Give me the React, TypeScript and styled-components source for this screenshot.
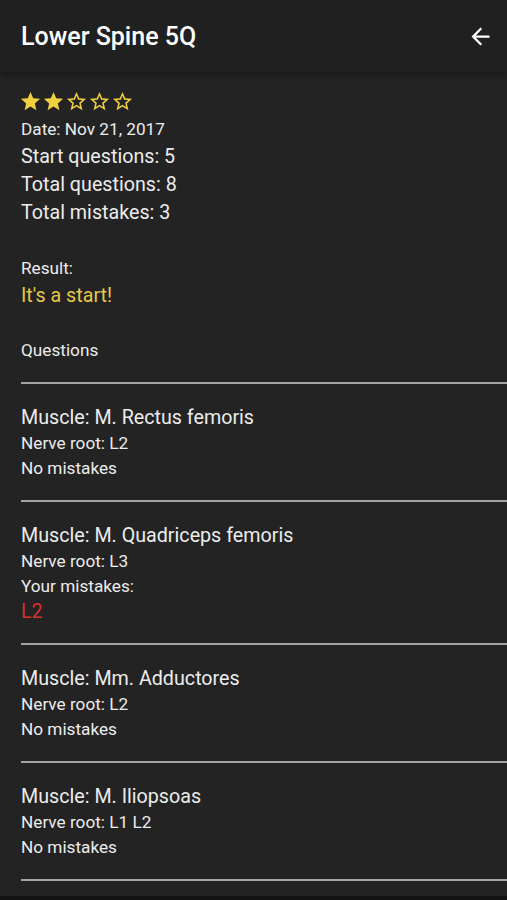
import React from "react";
import styled, { createGlobalStyle } from "styled-components";

const Global = createGlobalStyle`
  html, body { margin: 0; padding: 0; background: #131313; }
  body { font-family: Roboto, "Noto Sans", sans-serif; -webkit-font-smoothing: antialiased; }
`;

const Screen = styled.div`
  width: 507px;
  height: 896px;
  background: #232323;
  overflow: hidden;
  display: flex;
  flex-direction: column;
`;

const Header = styled.header`
  height: 72px;
  flex: 0 0 72px;
  background: #202020;
  display: flex;
  align-items: center;
  justify-content: space-between;
  padding: 0 13px 0 21px;
  box-shadow: 0 3px 6px rgba(0, 0, 0, 0.35);
  position: relative;
  z-index: 1;
`;

const Title = styled.h1`
  margin: 0;
  font-size: 25px;
  font-weight: 500;
  color: #ffffff;
`;

const IconButton = styled.button`
  background: none;
  border: none;
  padding: 0;
  width: 28px;
  height: 28px;
  display: flex;
  align-items: center;
  justify-content: center;
  color: #fff;
`;

const Content = styled.main`
  padding: 15px 0 0 21px;
  display: flex;
  flex-direction: column;
`;

const Stars = styled.div`
  display: flex;
  align-items: center;
  height: 28px;
  margin-left: -2px;
`;

const Line = styled.div<{ $size?: number; $lh?: number; $color?: string }>`
  font-size: ${(p) => p.$size ?? 17.2}px;
  line-height: ${(p) => p.$lh ?? 28}px;
  color: ${(p) => p.$color ?? "#ececec"};
`;

const Section = styled.section<{ $mt: number }>`
  margin-top: ${(p) => p.$mt}px;
  display: flex;
  flex-direction: column;
`;

const Divider = styled.hr`
  margin: 0;
  border: none;
  height: 2px;
  background: #a3a3a3;
`;

const Item = styled.div`
  padding: 21px 0 19px;
  display: flex;
  flex-direction: column;
`;

const FILLED = "M12 17.27L18.18 21l-1.64-7.03L22 9.24l-7.19-.61L12 2 9.19 8.63 2 9.24l5.46 4.73L5.82 21z";
const BORDER =
  "M22 9.24l-7.19-.62L12 2 9.19 8.63 2 9.24l5.46 4.73L5.82 21 12 17.27 18.18 21l-1.63-7.03L22 9.24zM12 15.4l-3.76 2.27 1-4.28-3.32-2.88 4.38-.38L12 6.1l1.71 4.04 4.38.38-3.32 2.88 1 4.28L12 15.4z";

const Star = ({ filled }: { filled: boolean }) => (
  <svg width="23" height="23" viewBox="0 0 24 24" fill="#f3d03e">
    <path d={filled ? FILLED : BORDER} />
  </svg>
);

type Q = { muscle: string; root: string; mistakes?: string };
const questions: Q[] = [
  { muscle: "M. Rectus femoris", root: "L2" },
  { muscle: "M. Quadriceps femoris", root: "L3", mistakes: "L2" },
  { muscle: "Mm. Adductores", root: "L2" },
  { muscle: "M. Iliopsoas", root: "L1 L2" },
];

export default function App() {
  return (
    <>
      <Global />
      <Screen>
        <Header>
          <Title>Lower Spine 5Q</Title>
          <IconButton aria-label="back">
            <svg width="27" height="27" viewBox="0 0 24 24" fill="#ffffff">
              <path d="M20 11H7.83l5.59-5.59L12 4l-8 8 8 8 1.41-1.41L7.83 13H20v-2z" />
            </svg>
          </IconButton>
        </Header>
        <Content>
          <Stars>
            {[0, 1, 2, 3, 4].map((i) => (
              <Star key={i} filled={i < 2} />
            ))}
          </Stars>
          <Line>Date: Nov 21, 2017</Line>
          <Line $size={19.7}>Start questions: 5</Line>
          <Line $size={19.7}>Total questions: 8</Line>
          <Line $size={19.7}>Total mistakes: 3</Line>
          <Section $mt={27}>
            <Line>Result:</Line>
            <Line $size={19.7} $color="#e4c84a">It's a start!</Line>
          </Section>
          <Section $mt={26}>
            <Line>Questions</Line>
          </Section>
          <Section $mt={18}>
            <Divider />
            {questions.map((q) => (
              <React.Fragment key={q.muscle}>
                <Item>
                  <Line $size={19.7} $lh={26}>Muscle: {q.muscle}</Line>
                  <Line $lh={25}>Nerve root: {q.root}</Line>
                  {q.mistakes ? (
                    <>
                      <Line $lh={25}>Your mistakes:</Line>
                      <Line $size={19.7} $lh={25} $color="#d6312b">{q.mistakes}</Line>
                    </>
                  ) : (
                    <Line $lh={25}>No mistakes</Line>
                  )}
                </Item>
                <Divider />
              </React.Fragment>
            ))}
          </Section>
        </Content>
      </Screen>
    </>
  );
}
